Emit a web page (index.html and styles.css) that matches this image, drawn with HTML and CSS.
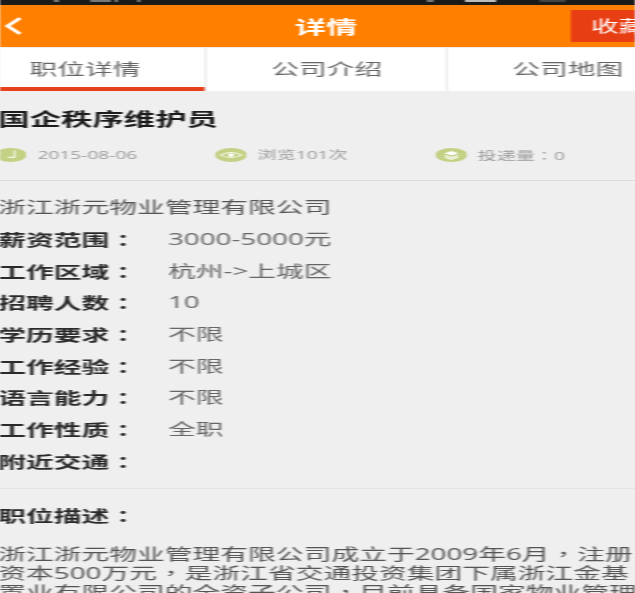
FILE: index.html
```html
<!DOCTYPE html>
<html lang="zh-CN">
<head>
<meta charset="utf-8">
<title>详情</title>
<link rel="stylesheet" href="styles.css">
</head>
<body>
<div class="page">
  <div class="status">
    <span class="mark m1"></span><span class="mark m2"></span><span class="mark m3"></span><span class="mark m4"></span><span class="mark m5"></span><span class="mark m6"></span><span class="mark m7"></span>
  </div>
  <header class="head">
    <svg class="back" viewBox="0 0 12 20"><path d="M10.500 1.500 2.500 10l8 8.500" fill="none" stroke="#fff" stroke-width="2.800"/></svg>
    <h1 class="head-title">详情</h1>
    <button class="fav">收藏</button>
  </header>
  <nav class="tabs">
    <a class="tab active">职位详情</a>
    <a class="tab">公司介绍</a>
    <a class="tab">公司地图</a>
  </nav>
  <main class="body">
    <h2 class="job">国企秩序维护员</h2>
    <div class="meta">
      <div class="meta-item">
        <svg class="ico" viewBox="0 0 21 16"><ellipse cx="10.500" cy="8" rx="10.500" ry="8" fill="#c3d184"/><path d="M13 3v7.500H8.500" fill="none" stroke="#fff" stroke-width="1"/></svg>
        <span>2015-08-06</span>
      </div>
      <div class="meta-item">
        <svg class="ico" viewBox="0 0 21 16"><ellipse cx="10.500" cy="8" rx="10.500" ry="8" fill="#c3d184"/><path d="M3.500 8q7-6 14 0-7 6-14 0Z" fill="none" stroke="#fff" stroke-width="1"/><circle cx="10.500" cy="8" r="2" fill="#fff"/></svg>
        <span>浏览101次</span>
      </div>
      <div class="meta-item">
        <svg class="ico" viewBox="0 0 21 16"><ellipse cx="10.500" cy="8" rx="10.500" ry="8" fill="#c3d184"/><path d="m10.500 3.500 4.500 2.500-4.500 2.500L6 6Z" fill="#fff"/><path d="m6 8.500 4.500 2.500 4.500-2.500M6 10.500 10.500 13l4.500-2.500" fill="none" stroke="#fff" stroke-width="1"/></svg>
        <span>投递量<i class="p" lang="zh-Hant">：</i>0</span>
      </div>
    </div>
    <section class="info">
      <p class="line">浙江浙元物业管理有限公司</p>
      <dl class="rows">
        <div class="row"><dt>薪资范围<i class="p" lang="zh-Hant">：</i></dt><dd>3000-5000元</dd></div>
        <div class="row"><dt>工作区域<i class="p" lang="zh-Hant">：</i></dt><dd>杭州-&gt;上城区</dd></div>
        <div class="row"><dt>招聘人数<i class="p" lang="zh-Hant">：</i></dt><dd>10</dd></div>
        <div class="row"><dt>学历要求<i class="p" lang="zh-Hant">：</i></dt><dd>不限</dd></div>
        <div class="row"><dt>工作经验<i class="p" lang="zh-Hant">：</i></dt><dd>不限</dd></div>
        <div class="row"><dt>语言能力<i class="p" lang="zh-Hant">：</i></dt><dd>不限</dd></div>
        <div class="row"><dt>工作性质<i class="p" lang="zh-Hant">：</i></dt><dd>全职</dd></div>
        <div class="row"><dt>附近交通<i class="p" lang="zh-Hant">：</i></dt><dd></dd></div>
      </dl>
    </section>
    <section class="desc">
      <h3 class="desc-title">职位描述<i class="p" lang="zh-Hant">：</i></h3>
      <p class="desc-text">浙江浙元物业管理有限公司成立于2009年6月<i class="p" lang="zh-Hant">，</i>注册<br>资本500万元<i class="p" lang="zh-Hant">，</i>是浙江省交通投资集团下属浙江金基<br>置业有限公司的全资子公司<i class="p" lang="zh-Hant">，</i>目前具备国家物业管理</p>
    </section>
  </main>
</div>
</body>
</html>
```
FILE: styles.css
```css
html, body { margin: 0; padding: 0; height: 100%; overflow: hidden; background: #efefef; }
.page {
  width: 366px;
  height: 593px;
  overflow: hidden;
  transform: scaleX(1.735);
  transform-origin: 0 0;
  filter: blur(0.55px);
  background: #efefef;
  color: #555;
  font: 16px/24px "Open Sans", "Noto Sans CJK SC", sans-serif;
}
.p { font-style: normal; font-family: "Noto Sans CJK TC", sans-serif; }
.status { height: 5px; background: #1a1a1a; display: flex; overflow: hidden; }
.mark { height: 1.500px; flex: none; background: #777; }
.m1 { width: 3px; margin-left: 31px; }
.m2 { width: 12px; margin-left: 18px; }
.m3 { width: 2px; margin-left: 2px; }
.m4 { width: 2px; margin-left: 11px; }
.m5 { width: 4px; margin-left: 165px; }
.m6 { width: 18px; margin-left: 18px; background: #bbb; }
.m7 { width: 15px; margin-left: 25px; background: #444; }
.head {
  width: 375.800px;
  height: 42px;
  background: #ff8000;
  display: grid;
  grid-template-columns: 1fr auto 1fr;
  align-items: center;
}
.back { width: 11px; height: 20px; margin-left: 2px; margin-top: -1px; }
.head-title { margin: 0; font-size: 18px; font-weight: 700; color: #fff; line-height: 24px; font-family: "Noto Sans CJK SC", sans-serif; }
.fav {
  justify-self: end;
  width: 47.300px;
  height: 32px;
  margin: 0;
  padding: 0 0 0 12.100px;
  border: 0;
  background: #e83e14;
  color: #fff;
  font: inherit;
  text-align: left;
  white-space: nowrap;
  overflow: hidden;
}
.tabs { display: flex; height: 43px; margin: 1px 0 0 -20.500px; background: #fff; width: 417.200px; }
.tab {
  flex: 0 0 138.900px;
  box-sizing: border-box;
  text-align: center;
  line-height: 43px;
  color: #666;
  border-left: 1px solid #e6e6e6;
}
.tab:first-child { border-left: 0; }
.tab.active { border-bottom: 4px solid #e8401c; }
.body { margin-left: -1px; }
.job { margin: 0; padding: 14px 0 14px; font-size: 18.100px; line-height: 28px; font-weight: 700; color: #1c1c1c; }
.meta { display: flex; margin: 0 0 0 -2px; height: 33px; border-bottom: 1px solid #dcdcdc; font-size: 11px; color: #999; }
.meta-item { flex: 0 0 126.800px; display: flex; align-items: flex-start; gap: 6.300px; line-height: 16px; }
.ico { width: 18.400px; height: 16px; flex: none; }
.info { padding: 14px 0 7.400px; border-bottom: 1px solid #e4e4e4; }
.line { margin: 0; }
.rows { margin: 0; padding-top: 8px; }
.row { display: flex; height: 31.700px; line-height: 24px; }
.row dt { width: 97.800px; font-weight: 700; color: #2a2a2a; flex: none; }
.row dd { margin: 0; color: #666; }
.desc-title { margin: 0; padding-top: 14px; font-size: 16px; font-weight: 700; line-height: 24px; color: #2a2a2a; }
.desc-text { margin: 16px 0 0; line-height: 18px; color: #555; white-space: nowrap; }
```
